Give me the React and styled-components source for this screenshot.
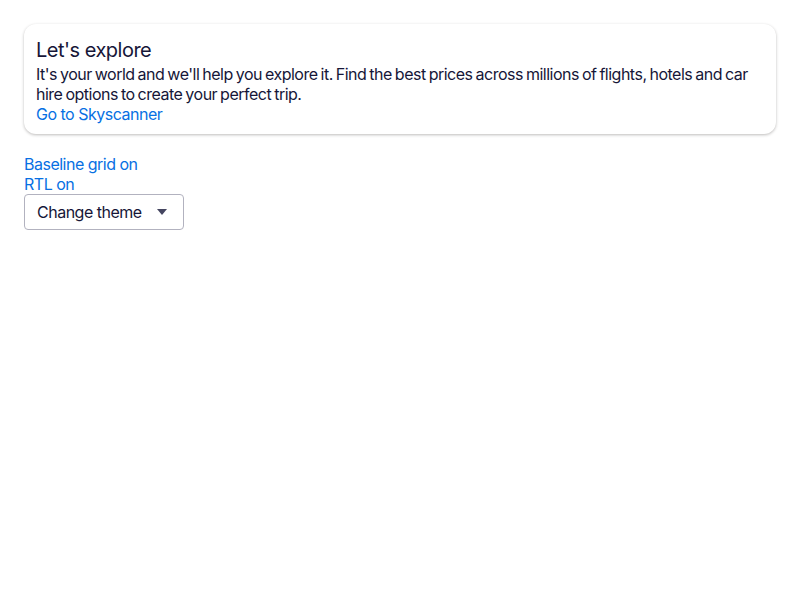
import React from 'react';
import styled, { createGlobalStyle } from 'styled-components';

const GlobalStyle = createGlobalStyle`
  body {
    margin: 0;
    background: #ffffff;
    font-family: "Inter", "Liberation Sans", sans-serif;
    letter-spacing: -0.5px;
    color: #161616;
  }
`;

const Page = styled.div`
  padding: 24px;
  display: flex;
  flex-direction: column;
  align-items: flex-start;
`;

const Card = styled.section`
  align-self: stretch;
  box-sizing: border-box;
  padding: 12px 12px 10px;
  border-radius: 12px;
  background: #fff;
  box-shadow: 0 1px 3px 0 rgba(37, 32, 31, 0.3);
  color: #161638;
`;

const Title = styled.h2`
  margin: 0;
  font-size: 20px;
  line-height: 28px;
  font-weight: 400;
`;

const Body = styled.p`
  margin: 0;
  font-size: 16px;
  line-height: 20px;
  word-spacing: -1px;
`;

const Link = styled.a`
  display: block;
  font-size: 16px;
  line-height: 20px;
  color: #0770e3;
  text-decoration: none;
  cursor: pointer;
`;

const Controls = styled.div`
  margin-top: 20px;
  display: flex;
  flex-direction: column;
  align-items: flex-start;
`;

const Select = styled.button`
  box-sizing: border-box;
  width: 160px;
  height: 36px;
  padding: 0 16px 0 12px;
  display: flex;
  align-items: center;
  justify-content: space-between;
  border: 1px solid #b2b2bf;
  border-radius: 4px;
  background: #fff;
  color: #161638;
  font-family: inherit;
  letter-spacing: inherit;
  font-size: 16px;
`;

const Caret = () => (
  <svg width="10" height="6" viewBox="0 0 10 6">
    <path d="M0 0h10L5 6z" fill="#444560" />
  </svg>
);

export default function App() {
  return (
    <>
      <GlobalStyle />
      <Page>
        <Card>
          <Title>Let's explore</Title>
          <Body>
            It's your world and we'll help you explore it. Find the best prices across millions of flights, hotels and car hire options to create your perfect trip.
          </Body>
          <Link>Go to Skyscanner</Link>
        </Card>
        <Controls>
          <Link>Baseline grid on</Link>
          <Link>RTL on</Link>
          <Select>
            Change theme
            <Caret />
          </Select>
        </Controls>
      </Page>
    </>
  );
}
